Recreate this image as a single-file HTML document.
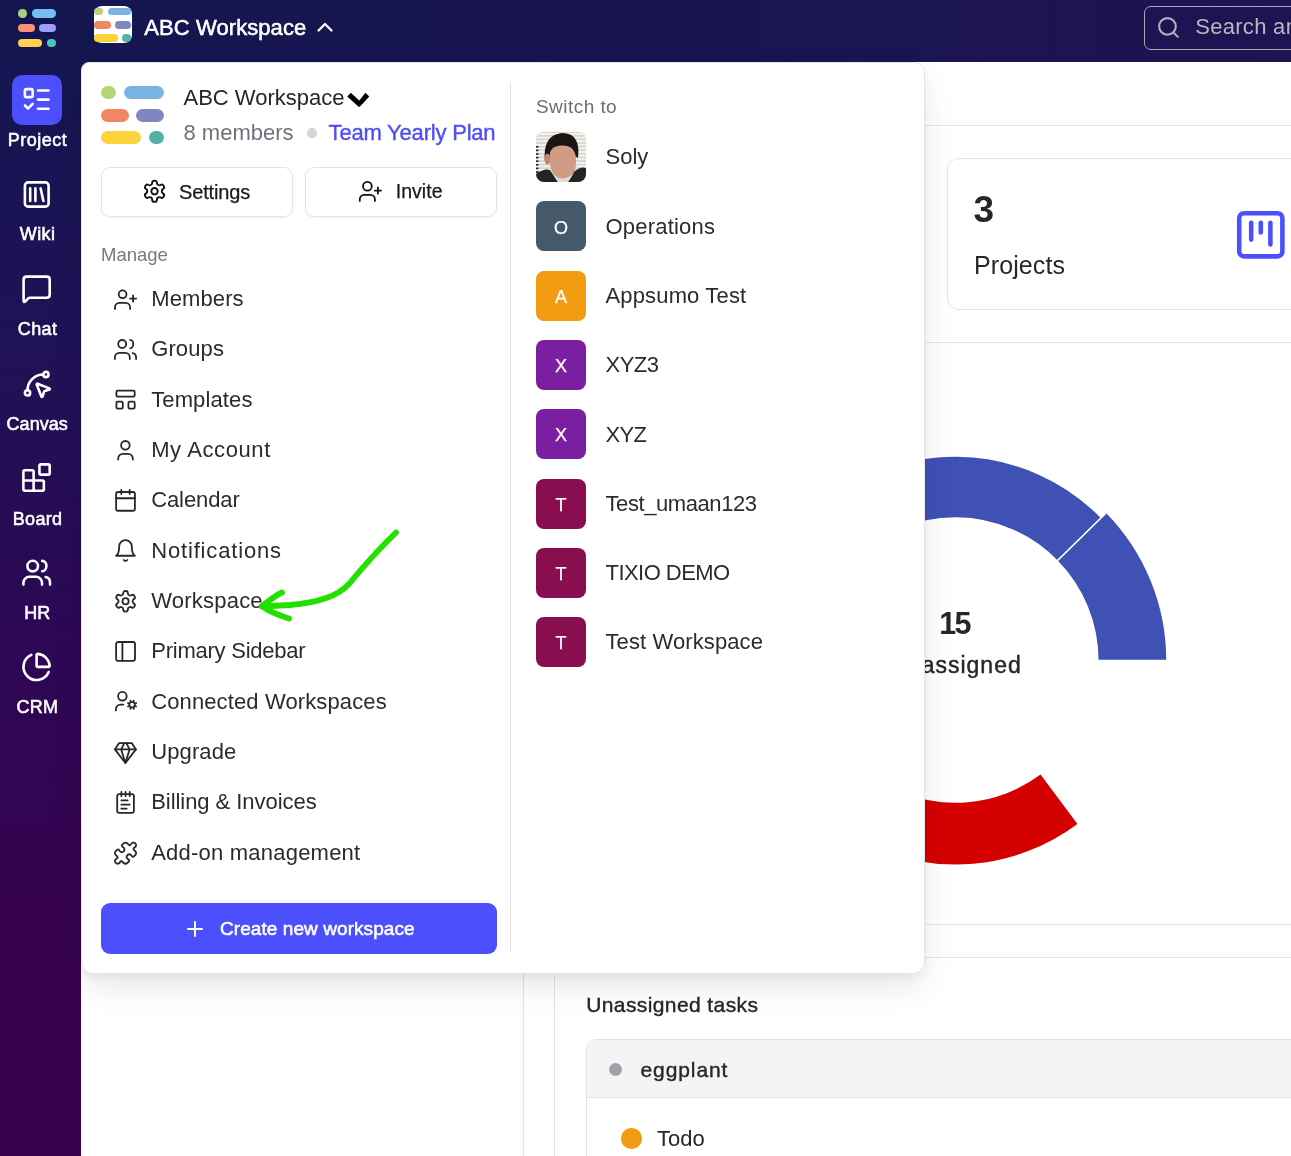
<!DOCTYPE html><html><head><meta charset="utf-8"><style>
html,body{margin:0;padding:0;width:1291px;height:1156px;overflow:hidden;background:#fff;}
body{position:relative;font-family:"Liberation Sans", sans-serif;}
.t{position:absolute;white-space:nowrap;}
svg{display:block;}
</style></head><body><div id="root" style="position:absolute;left:0;top:0;width:1291px;height:1156px;overflow:hidden;will-change:transform">
<div style="position:absolute;left:81px;top:125px;width:1210px;height:1px;background:#e4e4e7"></div>
<div style="position:absolute;left:947px;top:158px;width:400px;height:152px;border:1px solid #e4e4e7;border-radius:12px;box-sizing:border-box;background:#fff"></div>
<div class="t" style="left:973.6px;top:191.48px;font-size:37px;line-height:37px;font-weight:700;color:#27272a;letter-spacing:0px;">3</div>
<div class="t" style="left:974px;top:253.34px;font-size:25px;line-height:25px;font-weight:400;color:#27272a;letter-spacing:0.1px;">Projects</div>
<svg style="position:absolute;left:1231.6px;top:205.9px;" width="57.6" height="57.6" viewBox="0 0 24 24" fill="none" stroke="#4b4ffc" stroke-width="1.9" stroke-linecap="round" stroke-linejoin="round"><rect width="18" height="18" x="3" y="3" rx="2"/><path d="M8 7v7"/><path d="M12 7v4"/><path d="M16 7v9"/></svg>
<div style="position:absolute;left:81px;top:342px;width:1210px;height:1px;background:#e4e4e7"></div>
<svg style="position:absolute;left:0;top:0" width="1291" height="1156" viewBox="0 0 1291 1156">
<path id="segA" fill="#3f51b5" stroke="#fff" stroke-width="1.5" d="M811.04 804.96 A204.3 204.3 0 1 1 1101.47 517.56 L1057.17 560.94 A142.3 142.3 0 1 0 854.88 761.12Z"/>
<path id="segB" fill="#3f51b5" stroke="#fff" stroke-width="1.5" d="M1106.61 512.52 A211.5 211.5 0 0 1 1167.00 660.50 L1097.80 660.50 A142.3 142.3 0 0 0 1057.17 560.94Z"/>
<path id="segC" fill="#d50000" stroke="#fff" stroke-width="0" d="M1077.42 824.06 A204 204 0 0 1 751.50 660.50 L813.20 660.50 A142.3 142.3 0 0 0 1040.54 774.59Z"/>
</svg>
<div class="t" style="left:654.5px;width:600px;text-align:center;top:607.98px;font-size:30.5px;line-height:30.5px;font-weight:700;color:#27272a;letter-spacing:-1.6px;">15</div>
<div class="t" style="left:656px;width:600px;text-align:center;top:653.83px;font-size:23px;line-height:23px;font-weight:400;color:#27272a;letter-spacing:1.0px;-webkit-text-stroke:0.45px #27272a;">Unassigned</div>
<div style="position:absolute;left:81px;top:924px;width:1210px;height:1px;background:#e4e4e7"></div>
<div style="position:absolute;left:81px;top:957px;width:1210px;height:1px;background:#e4e4e7"></div>
<div style="position:absolute;left:523px;top:62px;width:1px;height:1094px;background:#e4e4e7"></div>
<div style="position:absolute;left:554px;top:957px;width:1px;height:199px;background:#e4e4e7"></div>
<div class="t" style="left:586.2px;top:994.42px;font-size:21px;line-height:21px;font-weight:400;color:#27272a;letter-spacing:0.4px;-webkit-text-stroke:0.4px #27272a;">Unassigned tasks</div>
<div style="position:absolute;left:586px;top:1039px;width:800px;height:200px;border:1px solid #e4e4e7;border-radius:10px;box-sizing:border-box;background:#fff;overflow:hidden"></div>
<div style="position:absolute;left:587px;top:1040px;width:800px;height:57px;background:#f4f4f5;border-bottom:1px solid #e4e4e7;border-top-left-radius:10px"></div>
<div style="position:absolute;left:609px;top:1063px;width:13px;height:13px;border-radius:50%;background:#a1a1aa"></div>
<div class="t" style="left:640.5px;top:1059.22px;font-size:21px;line-height:21px;font-weight:400;color:#27272a;letter-spacing:0.9px;-webkit-text-stroke:0.4px #27272a;">eggplant</div>
<div style="position:absolute;left:621px;top:1128px;width:20.5px;height:20.5px;border-radius:50%;background:#f39c12"></div>
<div class="t" style="left:657px;top:1128.18px;font-size:22px;line-height:22px;font-weight:400;color:#27272a;letter-spacing:0px;">Todo</div>
<div style="position:absolute;left:81px;top:0px;width:1210px;height:62px;background:linear-gradient(90deg,#14164f 0%,#1a1550 50%,#1d1451 100%)"></div>
<div style="position:absolute;left:94px;top:5.7px;width:38px;height:37.4px;border-radius:8px;background:#fff;overflow:hidden">
</div>
<div style="position:absolute;left:94.00px;top:7.80px;width:8.92px;height:7.60px;border-radius:3.80px;background:#b5d47a"></div>
<div style="position:absolute;left:107.51px;top:7.80px;width:23.80px;height:7.60px;border-radius:3.80px;background:#7ab3e2"></div>
<div style="position:absolute;left:94.00px;top:21.14px;width:16.66px;height:7.60px;border-radius:3.80px;background:#ef8762"></div>
<div style="position:absolute;left:114.83px;top:21.14px;width:16.66px;height:7.60px;border-radius:3.80px;background:#7f87c3"></div>
<div style="position:absolute;left:94.00px;top:34.36px;width:23.80px;height:7.60px;border-radius:3.80px;background:#fdd33c"></div>
<div style="position:absolute;left:122.44px;top:34.36px;width:9.04px;height:7.60px;border-radius:3.80px;background:#52b2a5"></div>
<div class="t" style="left:144.3px;top:16.98px;font-size:22px;line-height:22px;font-weight:400;color:#fff;letter-spacing:0.08px;-webkit-text-stroke:0.55px #fff;">ABC Workspace</div>
<svg style="position:absolute;left:313.3px;top:15px;" width="24" height="24" viewBox="0 0 24 24" fill="none" stroke="#fff" stroke-width="2.3" stroke-linecap="round" stroke-linejoin="round"><path d="m18.5 15.5-6.5-6.5-6.5 6.5"/></svg>
<div style="position:absolute;left:1144px;top:6px;width:200px;height:44px;border:1.3px solid #a9a6bd;border-radius:7px;box-sizing:border-box"></div>
<svg style="position:absolute;left:1156px;top:15.3px;" width="25" height="25" viewBox="0 0 24 24" fill="none" stroke="#b2b0bd" stroke-width="2" stroke-linecap="round" stroke-linejoin="round"><circle cx="11" cy="11" r="8"/><path d="m21 21-4.3-4.3"/></svg>
<div class="t" style="left:1195.2px;top:16.48px;font-size:22px;line-height:22px;font-weight:400;color:#b9b7c5;letter-spacing:0.3px;">Search and</div>
<div style="position:absolute;left:0px;top:0px;width:81px;height:1156px;background:linear-gradient(180deg,#131650 0%,#1f1255 30%,#2d0854 55%,#36024f 78%,#37004f 100%)"></div>
<div style="position:absolute;left:17.90px;top:9.00px;width:9.04px;height:8.52px;border-radius:4.26px;background:#a9d17f"></div>
<div style="position:absolute;left:31.59px;top:9.00px;width:24.12px;height:8.52px;border-radius:4.26px;background:#76bdf2"></div>
<div style="position:absolute;left:17.90px;top:23.93px;width:16.88px;height:8.52px;border-radius:4.26px;background:#f98f73"></div>
<div style="position:absolute;left:39.00px;top:23.93px;width:16.88px;height:8.52px;border-radius:4.26px;background:#9b9ff6"></div>
<div style="position:absolute;left:17.90px;top:38.74px;width:24.12px;height:8.52px;border-radius:4.26px;background:#fdd14d"></div>
<div style="position:absolute;left:46.72px;top:38.74px;width:9.17px;height:8.52px;border-radius:4.26px;background:#4fc7b5"></div>
<div style="position:absolute;left:12px;top:75px;width:50px;height:50px;background:#4b4ffc;border-radius:10px"></div>
<svg style="position:absolute;left:0;top:0" width="81" height="800" viewBox="0 0 81 800"><g fill="none" stroke="#fff" stroke-width="2.6" stroke-linecap="round" stroke-linejoin="round"><rect x="24.85" y="89.15" width="7.8" height="8" rx="1.6"/><path d="M38 90.5H48.6 M38 99.6H48.6 M38 108.8H48.6"/><path d="M25 105.5 L28 108.6 L32.6 103.8"/><rect x="24.9" y="182.4" width="23.7" height="24.2" rx="3.2"/><path d="M30.2 188.4V201 M35.4 188.4V201 M40.6 188.4 L43.4 201"/><path d="M23.6 300.6 V279.6 Q23.6 276.6 26.6 276.6 H46.7 Q49.7 276.6 49.7 279.6 V294.8 Q49.7 297.8 46.7 297.8 H29.8 Q28.8 297.8 28.1 298.5 L25.4 301.3 Q23.6 303 23.6 300.6 Z"/><circle cx="32.7" cy="566.05" r="5.3"/><path d="M23.4 584.6 v-1.8 a6 6 0 0 1 6-6 h6.6 a6 6 0 0 1 6 6 v1.8"/><path d="M42.2 560.9 a4.2 5.2 0 0 1 0 10.4"/><path d="M45.6 577 a5 5.5 0 0 1 4.4 5.2 v2.4"/></g><g transform="translate(20.93,367.93) scale(1.314)" fill="none" stroke="#fff" stroke-width="1.979" stroke-linecap="round" stroke-linejoin="round"><path d="M12.034 12.681a.498.498 0 0 1 .647-.647l9 3.5a.5.5 0 0 1-.033.943l-3.444 1.068a1 1 0 0 0-.66.66l-1.067 3.443a.5.5 0 0 1-.943.033z"/><path d="M5 17A12 12 0 0 1 17 5"/><circle cx="19" cy="5" r="2"/><circle cx="5" cy="19" r="2"/></g><g transform="translate(19.00,460.00) scale(1.461)" fill="none" stroke="#fff" stroke-width="1.780" stroke-linecap="round" stroke-linejoin="round"><rect width="7" height="7" x="14" y="3" rx="1"/><path d="M10 21V8a1 1 0 0 0-1-1H4a1 1 0 0 0-1 1v12a1 1 0 0 0 1 1h12a1 1 0 0 0 1-1v-5a1 1 0 0 0-1-1H3"/></g><g transform="translate(20.88,651.18) scale(1.31)" fill="none" stroke="#fff" stroke-width="1.985" stroke-linecap="round" stroke-linejoin="round"><path d="M21 12c.552 0 1.005-.449.95-.998a10 10 0 0 0-8.953-8.951c-.55-.055-.998.398-.998.95v8a1 1 0 0 0 1 1z"/><path d="M21.21 15.89A10 10 0 1 1 8 2.83"/></g></svg>
<div class="t" style="left:-262.45px;width:600px;text-align:center;top:130.86px;font-size:18px;line-height:18px;font-weight:400;color:#fff;letter-spacing:0.5px;-webkit-text-stroke:0.55px #fff;">Project</div>
<div class="t" style="left:-262.375px;width:600px;text-align:center;top:224.96px;font-size:18px;line-height:18px;font-weight:400;color:#fff;letter-spacing:0.45px;-webkit-text-stroke:0.55px #fff;">Wiki</div>
<div class="t" style="left:-262.425px;width:600px;text-align:center;top:320.16px;font-size:18px;line-height:18px;font-weight:400;color:#fff;letter-spacing:0.35px;-webkit-text-stroke:0.55px #fff;">Chat</div>
<div class="t" style="left:-262.775px;width:600px;text-align:center;top:414.86px;font-size:18px;line-height:18px;font-weight:400;color:#fff;letter-spacing:0.05px;-webkit-text-stroke:0.55px #fff;">Canvas</div>
<div class="t" style="left:-262.425px;width:600px;text-align:center;top:509.56px;font-size:18px;line-height:18px;font-weight:400;color:#fff;letter-spacing:0.35px;-webkit-text-stroke:0.55px #fff;">Board</div>
<div class="t" style="left:-262.8px;width:600px;text-align:center;top:604.26px;font-size:18px;line-height:18px;font-weight:400;color:#fff;letter-spacing:0px;-webkit-text-stroke:0.55px #fff;">HR</div>
<div class="t" style="left:-262.7px;width:600px;text-align:center;top:698.26px;font-size:18px;line-height:18px;font-weight:400;color:#fff;letter-spacing:0.2px;-webkit-text-stroke:0.55px #fff;">CRM</div>
<div style="position:absolute;left:81px;top:60px;width:16px;height:16px;background:#14164f"></div>
<div style="position:absolute;left:81px;top:62px;width:844px;height:912px;background:#fff;border:1px solid #e4e4e7;border-radius:8px 10px 12px 12px;box-sizing:border-box;box-shadow:0 14px 32px rgba(0,0,0,0.09),0 4px 10px rgba(0,0,0,0.05)"></div>
<div style="position:absolute;left:101.00px;top:86.00px;width:15.00px;height:13.00px;border-radius:6.50px;background:#b5d47a"></div>
<div style="position:absolute;left:123.70px;top:86.00px;width:40.00px;height:13.00px;border-radius:6.50px;background:#7ab3e2"></div>
<div style="position:absolute;left:101.00px;top:108.80px;width:28.00px;height:13.00px;border-radius:6.50px;background:#ef8762"></div>
<div style="position:absolute;left:136.00px;top:108.80px;width:28.00px;height:13.00px;border-radius:6.50px;background:#7f87c3"></div>
<div style="position:absolute;left:101.00px;top:131.40px;width:40.00px;height:13.00px;border-radius:6.50px;background:#fdd33c"></div>
<div style="position:absolute;left:148.80px;top:131.40px;width:15.20px;height:13.00px;border-radius:6.50px;background:#52b2a5"></div>
<div class="t" style="left:183.5px;top:87.48px;font-size:22px;line-height:22px;font-weight:400;color:#262626;letter-spacing:0px;">ABC Workspace</div>
<svg style="position:absolute;left:0;top:0;overflow:visible" width="1" height="1"><path d="M350.8 92.8 L359.3 100.4 L365.4 92.7 L369.3 96.4 L360.2 106.2 Q359.1 107.3 358 106.2 L347.3 96.4Z" fill="#000"/></svg>
<div class="t" style="left:183.5px;top:122.28px;font-size:22px;line-height:22px;font-weight:400;color:#70707b;letter-spacing:0px;">8 members</div>
<div style="position:absolute;left:307px;top:128px;width:9.5px;height:9.5px;border-radius:50%;background:#d4d4d8"></div>
<div class="t" style="left:328.6px;top:122.28px;font-size:22px;line-height:22px;font-weight:400;color:#4f4ff5;letter-spacing:-0.2px;-webkit-text-stroke:0.4px #4f4ff5;">Team Yearly Plan</div>
<div style="position:absolute;left:101px;top:167px;width:192px;height:50px;border:1px solid #e4e4e7;border-radius:9px;box-sizing:border-box;box-shadow:0 1px 2px rgba(0,0,0,0.06)"></div>
<div style="position:absolute;left:305px;top:167px;width:192px;height:50px;border:1px solid #e4e4e7;border-radius:9px;box-sizing:border-box;box-shadow:0 1px 2px rgba(0,0,0,0.06)"></div>
<div class="t" style="left:179px;top:181.87px;font-size:20px;line-height:20px;font-weight:400;color:#18181b;letter-spacing:-0.15px;-webkit-text-stroke:0.25px #18181b;">Settings</div>
<div class="t" style="left:395.7px;top:182.29px;font-size:19.5px;line-height:19.5px;font-weight:400;color:#18181b;letter-spacing:0.05px;-webkit-text-stroke:0.25px #18181b;">Invite</div>
<div class="t" style="left:101px;top:246.44px;font-size:18.5px;line-height:18.5px;font-weight:400;color:#787882;letter-spacing:0px;">Manage</div>
<svg style="position:absolute;left:0;top:0" width="1291" height="1156" viewBox="0 0 1291 1156"><g transform="translate(141.80,178.50) scale(1.06)" fill="none" stroke="#111" stroke-width="1.792" stroke-linecap="round" stroke-linejoin="round"><path d="M12.22 2h-.44a2 2 0 0 0-2 2v.18a2 2 0 0 1-1 1.73l-.43.25a2 2 0 0 1-2 0l-.15-.08a2 2 0 0 0-2.73.73l-.22.38a2 2 0 0 0 .73 2.730l.15.1a2 2 0 0 1 1 1.72v.51a2 2 0 0 1-1 1.74l-.15.09a2 2 0 0 0-.73 2.73l.22.38a2 2 0 0 0 2.73.73l.15-.08a2 2 0 0 1 2 0l.43.25a2 2 0 0 1 1 1.73V20a2 2 0 0 0 2 2h.44a2 2 0 0 0 2-2v-.18a2 2 0 0 1 1-1.73l.43-.25a2 2 0 0 1 2 0l.15.08a2 2 0 0 0 2.73-.73l.22-.39a2 2 0 0 0-.73-2.73l-.15-.08a2 2 0 0 1-1-1.74v-.5a2 2 0 0 1 1-1.74l.15-.09a2 2 0 0 0 .73-2.73l-.22-.38a2 2 0 0 0-2.73-.73l-.15.08a2 2 0 0 1-2 0l-.43-.25a2 2 0 0 1-1-1.73V4a2 2 0 0 0-2-2z"/><circle cx="12" cy="12" r="3"/></g><g fill="none" stroke="#111" stroke-width="1.8" stroke-linecap="round" stroke-linejoin="round"><circle cx="367.4" cy="186.25" r="4.4"/><path d="M359.79999999999995 200.95 v-1.60 a4.5 4.5 0 0 1 4.5 -4.5 h6.10 a4.5 4.5 0 0 1 4.5 4.5 v1.60"/><path d="M374.80 190.55 h6.2 M377.90 187.45 v6.2"/></g><g fill="none" stroke="#27272a" stroke-width="1.8" stroke-linecap="round" stroke-linejoin="round"><circle cx="122.6" cy="294.3" r="3.9"/><path d="M115.0 309.0 v-1.60 a4.5 4.5 0 0 1 4.5 -4.5 h6.10 a4.5 4.5 0 0 1 4.5 4.5 v1.60"/><path d="M130.00 298.60 h6.2 M133.10 295.50 v6.2"/></g><g fill="none" stroke="#27272a" stroke-width="1.8" stroke-linecap="round" stroke-linejoin="round"><circle cx="122.2" cy="344" r="4.0"/><path d="M114.9 359 v-1.6 a4.5 4.5 0 0 1 4.5-4.5 h5.9 a4.5 4.5 0 0 1 4.5 4.5 v1.6"/><path d="M130.2 339.9 a3 4.2 0 0 1 0 8.4"/><path d="M132.6 353.1 a4 4.5 0 0 1 3.5 4.4 v1.5"/></g><g fill="none" stroke="#27272a" stroke-width="1.8" stroke-linejoin="round"><rect x="116.4" y="390.7" width="18.3" height="5.9" rx="1.3"/><rect x="116.4" y="401.7" width="6.4" height="6.9" rx="1.3"/><rect x="128.4" y="401.7" width="6.3" height="6.9" rx="1.3"/></g><g fill="none" stroke="#27272a" stroke-width="1.8" stroke-linecap="round" stroke-linejoin="round"><circle cx="125.4" cy="445.3" r="4.3"/><path d="M118.2 459.5 v-0.9 a4.8 4.8 0 0 1 4.8-4.8 h5 a4.8 4.8 0 0 1 4.8 4.8 v0.9"/></g><g transform="translate(112.97,487.80) scale(1.044)" fill="none" stroke="#27272a" stroke-width="1.724" stroke-linecap="round" stroke-linejoin="round"><path d="M8 2v4"/><path d="M16 2v4"/><rect width="18" height="18" x="3" y="4" rx="2"/><path d="M3 10h18"/></g><g transform="translate(112.97,538.00) scale(1.044)" fill="none" stroke="#27272a" stroke-width="1.724" stroke-linecap="round" stroke-linejoin="round"><path d="M6 8a6 6 0 0 1 12 0c0 7 3 9 3 9H3s3-2 3-9"/><path d="M10.3 21a1.94 1.94 0 0 0 3.4 0"/></g><g transform="translate(113.20,588.92) scale(1.03)" fill="none" stroke="#27272a" stroke-width="1.748" stroke-linecap="round" stroke-linejoin="round"><path d="M12.22 2h-.44a2 2 0 0 0-2 2v.18a2 2 0 0 1-1 1.73l-.43.25a2 2 0 0 1-2 0l-.15-.08a2 2 0 0 0-2.73.73l-.22.38a2 2 0 0 0 .73 2.730l.15.1a2 2 0 0 1 1 1.72v.51a2 2 0 0 1-1 1.74l-.15.09a2 2 0 0 0-.73 2.73l.22.38a2 2 0 0 0 2.73.73l.15-.08a2 2 0 0 1 2 0l.43.25a2 2 0 0 1 1 1.73V20a2 2 0 0 0 2 2h.44a2 2 0 0 0 2-2v-.18a2 2 0 0 1 1-1.73l.43-.25a2 2 0 0 1 2 0l.15.08a2 2 0 0 0 2.73-.73l.22-.39a2 2 0 0 0-.73-2.73l-.15-.08a2 2 0 0 1-1-1.74v-.5a2 2 0 0 1 1-1.74l.15-.09a2 2 0 0 0 .73-2.73l-.22-.38a2 2 0 0 0-2.73-.73l-.15.08a2 2 0 0 1-2 0l-.43-.25a2 2 0 0 1-1-1.73V4a2 2 0 0 0-2-2z"/><circle cx="12" cy="12" r="3"/></g><g transform="translate(112.95,638.84) scale(1.05)" fill="none" stroke="#27272a" stroke-width="1.714" stroke-linecap="round" stroke-linejoin="round"><rect width="18" height="18" x="3" y="3" rx="2"/><path d="M9 3v18"/></g><g fill="none" stroke="#27272a" stroke-width="1.8" stroke-linecap="round" stroke-linejoin="round"><circle cx="122.4" cy="696.2" r="4.3"/><path d="M115.9 710.4 v-1 a4.8 4.8 0 0 1 4.8-4.8 h2.6"/></g><g fill="none" stroke="#27272a" stroke-linecap="round"><circle cx="132.1" cy="704.7" r="2.75" stroke-width="1.8"/><path d="M130.84 701.65 L130.38 700.54 M133.36 701.65 L133.82 700.54 M135.15 703.44 L136.26 702.98 M135.15 705.96 L136.26 706.42 M133.36 707.75 L133.82 708.86 M130.84 707.75 L130.38 708.86 M129.05 705.96 L127.94 706.42 M129.05 703.44 L127.94 702.98" stroke-width="1.7"/></g><g transform="translate(112.80,739.95) scale(1.05)" fill="none" stroke="#27272a" stroke-width="1.714" stroke-linecap="round" stroke-linejoin="round"><path d="M6 3h12l4 6-10 13L2 9Z"/><path d="M11 3 8 9l4 13 4-13-3-6"/><path d="M2 9h20"/></g><g transform="translate(113.00,789.90) scale(1.045)" fill="none" stroke="#27272a" stroke-width="1.722" stroke-linecap="round" stroke-linejoin="round"><path d="M8 2v4"/><path d="M12 2v4"/><path d="M16 2v4"/><rect width="16" height="18" x="4" y="4" rx="2"/><path d="M8 10h6"/><path d="M8 14h8"/><path d="M8 18h5"/></g><g transform="translate(112.80,840.42) scale(1.06)" fill="none" stroke="#27272a" stroke-width="1.698" stroke-linecap="round" stroke-linejoin="round"><path d="M19.439 7.85c-.049.322.059.648.289.878l1.568 1.568c.47.47.706 1.087.706 1.704s-.235 1.233-.706 1.704l-1.611 1.611a.98.98 0 0 1-.837.276c-.47-.07-.802-.48-.968-.925a2.501 2.501 0 1 0-3.214 3.214c.446.166.855.497.925.968a.979.979 0 0 1-.276.837l-1.61 1.61a2.404 2.404 0 0 1-1.705.707 2.402 2.402 0 0 1-1.704-.706l-1.568-1.568a1.026 1.026 0 0 0-.877-.29c-.493.074-.84.504-1.02.968a2.5 2.5 0 1 1-3.237-3.237c.464-.18.894-.527.967-1.020a1.026 1.026 0 0 0-.289-.877l-1.568-1.568A2.402 2.402 0 0 1 1.998 12c0-.617.236-1.234.706-1.704L4.230 8.770c.24-.24.581-.353.917-.303.515.077.877.528 1.073 1.01a2.5 2.5 0 1 0 3.259-3.259c-.482-.196-.933-.558-1.010-1.073-.05-.336.062-.676.303-.917l1.525-1.525A2.402 2.402 0 0 1 12 1.998c.617 0 1.234.236 1.704.706l1.568 1.568c.23.23.556.338.877.29.493-.074.84-.504 1.020-.968a2.5 2.5 0 1 1 3.237 3.237c-.464.18-.894.527-.967 1.020Z"/></g></svg>
<div class="t" style="left:151.2px;top:287.98px;font-size:22px;line-height:22px;font-weight:400;color:#2b2b2b;letter-spacing:0.12px;">Members</div>
<div class="t" style="left:151.2px;top:338.30px;font-size:22px;line-height:22px;font-weight:400;color:#2b2b2b;letter-spacing:0.12px;">Groups</div>
<div class="t" style="left:151.2px;top:388.62px;font-size:22px;line-height:22px;font-weight:400;color:#2b2b2b;letter-spacing:0.12px;">Templates</div>
<div class="t" style="left:151.2px;top:438.94px;font-size:22px;line-height:22px;font-weight:400;color:#2b2b2b;letter-spacing:0.6px;">My Account</div>
<div class="t" style="left:151.2px;top:489.26px;font-size:22px;line-height:22px;font-weight:400;color:#2b2b2b;letter-spacing:-0.1px;">Calendar</div>
<div class="t" style="left:151.2px;top:539.58px;font-size:22px;line-height:22px;font-weight:400;color:#2b2b2b;letter-spacing:0.84px;">Notifications</div>
<div class="t" style="left:151.2px;top:589.90px;font-size:22px;line-height:22px;font-weight:400;color:#2b2b2b;letter-spacing:0.22px;">Workspace</div>
<div class="t" style="left:151.2px;top:640.22px;font-size:22px;line-height:22px;font-weight:400;color:#2b2b2b;letter-spacing:-0.23px;">Primary Sidebar</div>
<div class="t" style="left:151.2px;top:690.54px;font-size:22px;line-height:22px;font-weight:400;color:#2b2b2b;letter-spacing:0.12px;">Connected Workspaces</div>
<div class="t" style="left:151.2px;top:740.86px;font-size:22px;line-height:22px;font-weight:400;color:#2b2b2b;letter-spacing:0.12px;">Upgrade</div>
<div class="t" style="left:151.2px;top:791.18px;font-size:22px;line-height:22px;font-weight:400;color:#2b2b2b;letter-spacing:-0.05px;">Billing &amp; Invoices</div>
<div class="t" style="left:151.2px;top:841.50px;font-size:22px;line-height:22px;font-weight:400;color:#2b2b2b;letter-spacing:0.22px;">Add-on management</div>
<div style="position:absolute;left:101px;top:903px;width:396px;height:51px;background:#4b4ffc;border-radius:9px"></div>
<svg style="position:absolute;left:182.5px;top:916.5px;" width="24" height="24" viewBox="0 0 24 24" fill="none" stroke="#fff" stroke-width="2" stroke-linecap="round" stroke-linejoin="round"><path d="M5 12h14"/><path d="M12 5v14"/></svg>
<div class="t" style="left:220px;top:919.42px;font-size:19px;line-height:19px;font-weight:400;color:#fff;letter-spacing:0.07px;-webkit-text-stroke:0.55px #fff;">Create new workspace</div>
<div style="position:absolute;left:510px;top:82px;width:1px;height:871px;background:#e4e4e7"></div>
<div class="t" style="left:536px;top:96.92px;font-size:19px;line-height:19px;font-weight:400;color:#6d6d78;letter-spacing:0.45px;">Switch to</div>
<div style="position:absolute;left:536px;top:132.10px;width:50px;height:50px;border-radius:8px;overflow:hidden;background:#d9d8d2">
<svg width="50" height="50" viewBox="0 0 50 50"><rect width="50" height="50" fill="#d6d5cf"/><g stroke="#f4f3ee" stroke-width="1.8"><line x1="0" y1="2.0" x2="50" y2="2.0"/><line x1="0" y1="5.6" x2="50" y2="5.6"/><line x1="0" y1="9.2" x2="50" y2="9.2"/><line x1="0" y1="12.8" x2="50" y2="12.8"/><line x1="0" y1="16.4" x2="50" y2="16.4"/><line x1="0" y1="20.0" x2="50" y2="20.0"/><line x1="0" y1="23.6" x2="50" y2="23.6"/><line x1="0" y1="27.2" x2="50" y2="27.2"/><line x1="0" y1="30.8" x2="50" y2="30.8"/><line x1="0" y1="34.4" x2="50" y2="34.4"/><line x1="0" y1="38.0" x2="50" y2="38.0"/><line x1="0" y1="41.6" x2="50" y2="41.6"/><line x1="0" y1="45.2" x2="50" y2="45.2"/><line x1="0" y1="48.800000000000004" x2="50" y2="48.800000000000004"/></g><g fill="#222"><rect x="0" y="14.0" width="2.5" height="1.6"/><rect x="0" y="17.6" width="2.5" height="1.6"/><rect x="0" y="21.2" width="2.5" height="1.6"/><rect x="0" y="24.8" width="2.5" height="1.6"/><rect x="0" y="28.4" width="2.5" height="1.6"/><rect x="0" y="32.0" width="2.5" height="1.6"/><rect x="0" y="35.6" width="2.5" height="1.6"/><rect x="0" y="39.2" width="2.5" height="1.6"/></g><path d="M9 30 Q6 3 26 1 Q45 1 42 26 L39 24 Q38 15 30 14 Q20 13 15 20 L13 30 Z" fill="#1c1612"/><ellipse cx="11.5" cy="27" rx="3" ry="5.5" fill="#c08670"/><path d="M14 20 Q17 13 27 13.5 Q39 15 40 26 Q41 40 35 45 Q29 49 22 46 Q15 42 14 32 Z" fill="#d09c84"/><path d="M0 42 Q8 36 14 38 L22 50 L0 50 Z" fill="#242424"/><path d="M50 36 Q44 34 38 40 L32 50 L50 50 Z" fill="#242424"/><path d="M14 38 L22 50 L32 50 L38 41 Q31 48 22 46 Q16 43 14 38Z" fill="#dcdcdc"/></svg></div>
<div class="t" style="left:605.5px;top:146.38px;font-size:22px;line-height:22px;font-weight:400;color:#2b2b2b;letter-spacing:0px;">Soly</div>
<div style="position:absolute;left:536px;top:201.39px;width:50px;height:50px;background:#44596a;border-radius:8px"></div>
<div class="t" style="left:261px;width:600px;text-align:center;top:218.55px;font-size:18px;line-height:18px;font-weight:400;color:#fff;letter-spacing:0px;-webkit-text-stroke:0.25px #fff;">O</div>
<div class="t" style="left:605.5px;top:215.68px;font-size:22px;line-height:22px;font-weight:400;color:#2b2b2b;letter-spacing:0.2px;">Operations</div>
<div style="position:absolute;left:536px;top:270.68px;width:50px;height:50px;background:#f39c12;border-radius:8px"></div>
<div class="t" style="left:261px;width:600px;text-align:center;top:287.84px;font-size:18px;line-height:18px;font-weight:400;color:#fff;letter-spacing:0px;-webkit-text-stroke:0.25px #fff;">A</div>
<div class="t" style="left:605.5px;top:284.98px;font-size:22px;line-height:22px;font-weight:400;color:#2b2b2b;letter-spacing:0.15px;">Appsumo Test</div>
<div style="position:absolute;left:536px;top:339.97px;width:50px;height:50px;background:#7b1fa2;border-radius:8px"></div>
<div class="t" style="left:261px;width:600px;text-align:center;top:357.13px;font-size:18px;line-height:18px;font-weight:400;color:#fff;letter-spacing:0px;-webkit-text-stroke:0.25px #fff;">X</div>
<div class="t" style="left:605.5px;top:354.28px;font-size:22px;line-height:22px;font-weight:400;color:#2b2b2b;letter-spacing:-0.5px;">XYZ3</div>
<div style="position:absolute;left:536px;top:409.26px;width:50px;height:50px;background:#7b1fa2;border-radius:8px"></div>
<div class="t" style="left:261px;width:600px;text-align:center;top:426.42px;font-size:18px;line-height:18px;font-weight:400;color:#fff;letter-spacing:0px;-webkit-text-stroke:0.25px #fff;">X</div>
<div class="t" style="left:605.5px;top:423.58px;font-size:22px;line-height:22px;font-weight:400;color:#2b2b2b;letter-spacing:-0.67px;">XYZ</div>
<div style="position:absolute;left:536px;top:478.55px;width:50px;height:50px;background:#880e4f;border-radius:8px"></div>
<div class="t" style="left:261px;width:600px;text-align:center;top:495.71px;font-size:18px;line-height:18px;font-weight:400;color:#fff;letter-spacing:0px;-webkit-text-stroke:0.25px #fff;">T</div>
<div class="t" style="left:605.5px;top:492.88px;font-size:22px;line-height:22px;font-weight:400;color:#2b2b2b;letter-spacing:-0.42px;">Test_umaan123</div>
<div style="position:absolute;left:536px;top:547.84px;width:50px;height:50px;background:#880e4f;border-radius:8px"></div>
<div class="t" style="left:261px;width:600px;text-align:center;top:565.00px;font-size:18px;line-height:18px;font-weight:400;color:#fff;letter-spacing:0px;-webkit-text-stroke:0.25px #fff;">T</div>
<div class="t" style="left:605.5px;top:562.18px;font-size:22px;line-height:22px;font-weight:400;color:#2b2b2b;letter-spacing:-0.54px;">TIXIO DEMO</div>
<div style="position:absolute;left:536px;top:617.13px;width:50px;height:50px;background:#880e4f;border-radius:8px"></div>
<div class="t" style="left:261px;width:600px;text-align:center;top:634.29px;font-size:18px;line-height:18px;font-weight:400;color:#fff;letter-spacing:0px;-webkit-text-stroke:0.25px #fff;">T</div>
<div class="t" style="left:605.5px;top:631.48px;font-size:22px;line-height:22px;font-weight:400;color:#2b2b2b;letter-spacing:0.1px;">Test Workspace</div>
<svg style="position:absolute;left:0;top:0" width="1291" height="1156" viewBox="0 0 1291 1156" fill="none" stroke="#24e000" stroke-width="5.8" stroke-linecap="round" stroke-linejoin="round"><path d="M396 532.5 C380 548 362 568 349 584 C337 597 315 603 290 605 L262 606.5"/><path d="M282 592.5 C274 596 268 602 262 606 C268 611 278 615 289 618.5"/></svg>
</div></body></html>
